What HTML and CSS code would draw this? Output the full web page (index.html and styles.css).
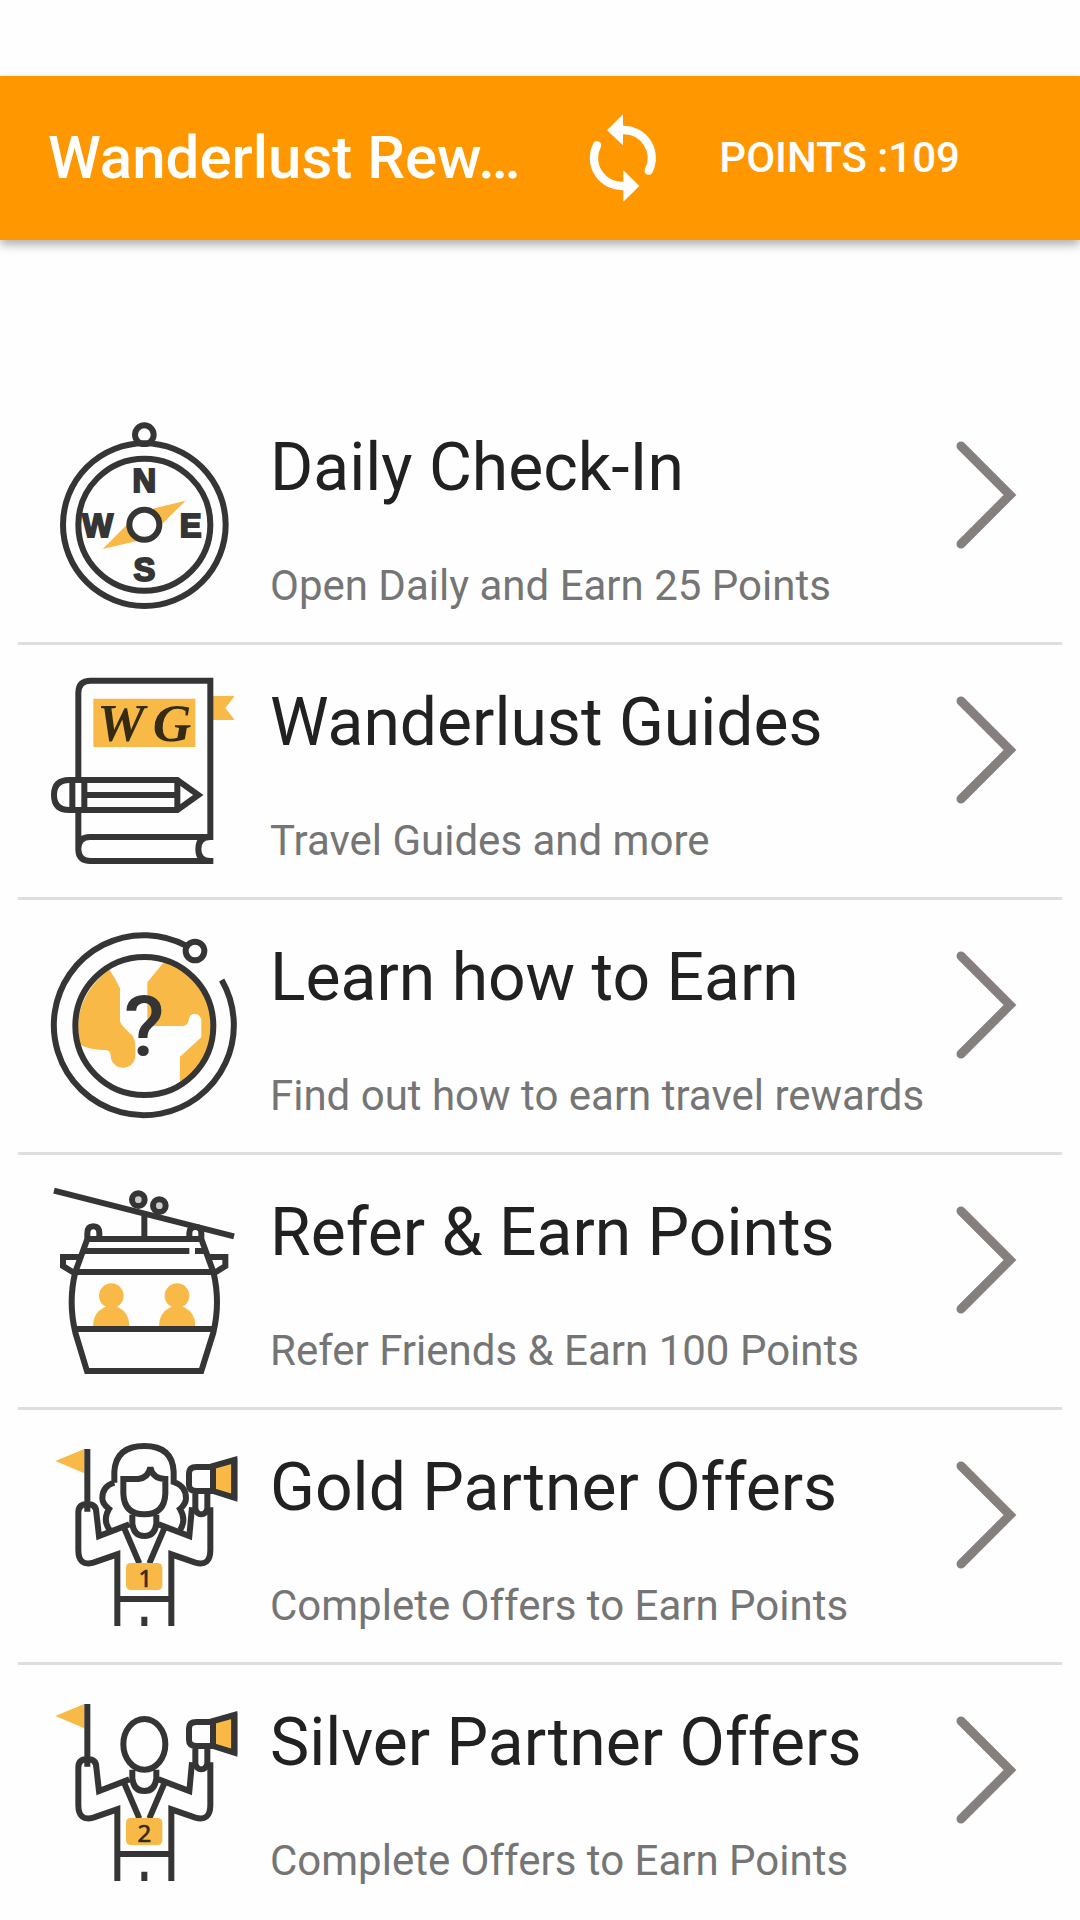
FILE: index.html
```
<!DOCTYPE html>
<html lang="en">
<head>
<meta charset="utf-8">
<meta name="viewport" content="width=device-width, initial-scale=1">
<title>Wanderlust Rewards</title>
<link rel="stylesheet" href="styles.css">
</head>
<body>
<header class="toolbar">
  <h1>Wanderlust Rew…</h1>
  <button class="refresh" aria-label="Refresh">
    <svg viewBox="0 0 390 390">
      <path d="M186 114A84 84 0 0 1 263 236M108 160A84 84 0 0 0 186 282" fill="none" stroke="#fff" stroke-width="25" stroke-linecap="round"/>
      <path d="M186 67V160L138 115ZM187 235V329L235 282Z" fill="#fff"/>
    </svg>
  </button>
  <button class="points">POINTS :109</button>
</header>

<main class="menu">
  <a class="item" href="#checkin">
    <svg class="icon" viewBox="0 0 630 630">
      <circle class="line" cx="313" cy="74" r="28"/>
      <circle class="line" cx="313" cy="344" r="244"/>
      <circle class="line" cx="313" cy="344" r="198"/>
      <path class="fill" d="M188 417L262 343L343 295L437 272L364 344L292 393Z"/>
      <circle class="line paper" cx="313" cy="344" r="45"/>
      <g class="compass">
        <text x="313" y="245">N</text>
        <text x="173" y="380">W</text>
        <text x="452" y="380">E</text>
        <text x="313" y="514">S</text>
      </g>
    </svg>
    <div class="text">
      <h2>Daily Check-In</h2>
      <p>Open Daily and Earn 25 Points</p>
    </div>
    <svg class="arrow" viewBox="0 0 62 110"><path d="M5 6L54 55L5 104"/></svg>
  </a>

  <a class="item" href="#guides">
    <svg class="icon" viewBox="0 0 630 630">
      <path class="fill" d="M519 93H584L556 129L584 165H519ZM160 101H466V246H160Z"/>
      <path class="line" d="M115 345V84Q115 47 152 47H511V516H150Q115 516 115 552Q115 588 152 588H520M115 440V555M511 516Q475 516 475 552Q475 588 511 588"/>
      <path class="line paper" d="M88 345H412L475 390L412 435H88Q42 435 42 390Q42 345 88 345Z"/>
      <path class="line" d="M97 345V435M133 345V435M412 345V435M133 390H412"/>
      <text class="script" x="172" y="228">W</text>
      <text class="script" x="338" y="228">G</text>
    </svg>
    <div class="text">
      <h2>Wanderlust Guides</h2>
      <p>Travel Guides and more</p>
    </div>
    <svg class="arrow" viewBox="0 0 62 110"><path d="M5 6L54 55L5 104"/></svg>
  </a>

  <a class="item" href="#learn">
    <svg class="icon" viewBox="0 0 630 630">
      <path class="fill" d="M207 148Q225 173 240 205V303Q244 318 275 344Q286 358 286 380V405A37 37 0 0 1 212 408Q212 390 196 390Q152 390 120 374Q92 240 207 148ZM374 124Q520 165 516 325Q515 425 420 486V410L484 352V300Q480 282 465 282Q447 282 446 302Q442 318 425 318H322V187Z"/>
      <circle class="line" cx="313" cy="318" r="207"/>
      <path class="line" d="M438 77A270 270 0 1 0 545 180"/>
      <circle class="line paper" cx="465" cy="93" r="28"/>
      <text class="question" x="313" y="408">?</text>
    </svg>
    <div class="text">
      <h2>Learn how to Earn</h2>
      <p>Find out how to earn travel rewards</p>
    </div>
    <svg class="arrow" viewBox="0 0 62 110"><path d="M5 6L54 55L5 104"/></svg>
  </a>

  <a class="item" href="#refer">
    <svg class="icon" viewBox="0 0 630 630">
      <path class="line" d="M42 47L582 184M313 113V192M136 192H490M130 228H448M465 228H500M106 291H520M104 462H522"/>
      <circle class="line wheel" cx="295" cy="74" r="19"/>
      <circle class="line wheel" cx="358" cy="92" r="19"/>
      <path class="line" d="M142 192V175Q142 154 160 154Q178 154 178 175V192M448 192V175Q448 156 466 156Q484 156 484 175V192M142 192L106 291Q84 380 106 473L141 588H484L520 473Q542 380 520 291L484 192M128 246H69V273L104 295M498 246H556V273L522 295"/>
      <g class="fill">
        <circle cx="214" cy="362" r="37"/>
        <path d="M159 453Q159 414 193 397Q214 388 235 397Q268 414 268 453Z"/>
        <circle cx="411" cy="362" r="37"/>
        <path d="M357 453Q357 414 391 397Q412 388 433 397Q466 414 466 453Z"/>
      </g>
    </svg>
    <div class="text">
      <h2>Refer &amp; Earn Points</h2>
      <p>Refer Friends &amp; Earn 100 Points</p>
    </div>
    <svg class="arrow" viewBox="0 0 62 110"><path d="M5 6L54 55L5 104"/></svg>
  </a>

  <a class="item" href="#gold">
    <svg class="icon" viewBox="0 0 630 630">
      <defs>
        <!-- body, flag and megaphone are the same for both partners -->
        <g id="guide">
          <path class="fill" d="M46 93L133 57V130ZM520 108L580 92V202L520 183Z"/>
          <path class="line" d="M142 57V245M142 222Q115 222 115 248V360Q115 410 160 398L232 373V588M142 222Q169 222 169 248L177 318L268 283M356 283L448 318L456 232M511 232V360Q511 410 466 398L394 373V588M232 507H394M313 560V588M277 254V280Q281 318 313 318Q345 318 349 280V254M250 288L298 400M376 288L328 400"/>
          <path class="line" d="M519 111H470Q447 111 447 130V165Q447 183 470 183H519V108L583 90V203L519 183M466 183V236Q470 253 484 253Q498 253 502 236V183"/>
          <path class="line" d="M583 84V209"/>
          <rect class="fill" x="258" y="399" width="109" height="81" rx="14"/>
        </g>
      </defs>
      <path class="line" d="M223 158V125Q228 48 313 48Q397 48 401 125V156Q438 168 438 205Q438 222 420 237Q440 270 420 300M223 158Q187 168 187 205Q187 222 207 237Q187 270 209 300"/>
      <path class="line" d="M250 147H295Q325 143 331 112Q338 146 376 147V190Q374 253 313 253Q252 253 250 190Z"/>
      <use href="#guide"/>
      <text class="badge" x="316" y="470">1</text>
    </svg>
    <div class="text">
      <h2>Gold Partner Offers</h2>
      <p>Complete Offers to Earn Points</p>
    </div>
    <svg class="arrow" viewBox="0 0 62 110"><path d="M5 6L54 55L5 104"/></svg>
  </a>

  <a class="item" href="#silver">
    <svg class="icon" viewBox="0 0 630 630">
      <ellipse class="line" cx="313" cy="178" rx="63" ry="76"/>
      <use href="#guide"/>
      <text class="badge" x="313" y="470">2</text>
    </svg>
    <div class="text">
      <h2>Silver Partner Offers</h2>
      <p>Complete Offers to Earn Points</p>
    </div>
    <svg class="arrow" viewBox="0 0 62 110"><path d="M5 6L54 55L5 104"/></svg>
  </a>
</main>
</body>
</html>
```
FILE: styles.css
```
* {
  box-sizing: border-box;
}

body {
  margin: 0;
  padding-top: 76px;
  background: #fefefe;
  font-family: Roboto, sans-serif;
}

h1, h2, p {
  margin: 0;
  font-weight: normal;
}

button {
  border: 0;
  padding: 0;
  background: none;
  color: inherit;
  font: inherit;
}

/* Orange bar on top */
.toolbar {
  display: flex;
  align-items: center;
  height: 164px;
  padding: 0 120px 2px 48px;
  background: #ff9800;
  color: #fff;
  box-shadow: 0 5px 9px rgba(0, 0, 0, 0.3);
}

.toolbar h1 {
  flex: 1;
  white-space: nowrap;
  font-size: 60px;
  font-weight: 500;
}

.refresh {
  width: 130px;
  height: 130px;
}

.refresh svg {
  display: block;
}

.points {
  margin-left: 28px;
  font-size: 42px;
  font-weight: 500;
}

/* List of rewards */
.menu {
  margin: 150px 18px 0;
}

.item {
  display: flex;
  height: 255px;
  border-bottom: 3px solid #dedede;
  color: #212121;
  text-decoration: none;
}

.item:last-child {
  border-bottom: 0;
}

.icon {
  flex: none;
  width: 210px;
  height: 210px;
  margin: 20px 0 0 22px;
}

.text {
  flex: 1;
  padding: 36px 0 0 20px;
  white-space: nowrap;
}

.text h2 {
  font-size: 66px;
  line-height: 84px;
}

.text p {
  margin-top: 51px;
  color: #757575;
  font-size: 42px;
  line-height: 50px;
}

.arrow {
  flex: none;
  width: 62px;
  height: 110px;
  margin: 50px 44px 0 0;
  fill: none;
  stroke: #857f7e;
  stroke-width: 9;
  stroke-linecap: round;
}

/* Icon parts */
.line {
  fill: none;
  stroke: #353535;
  stroke-width: 18;
}

.paper {
  fill: #fefefe;
}

.wheel {
  fill: #ccc;
}

.fill {
  fill: #f9b946;
}

.compass {
  fill: #353535;
  stroke: #353535;
  stroke-width: 6;
  font: bold 98px "Liberation Sans", sans-serif;
  text-anchor: middle;
}

.script {
  fill: #352a12;
  font: italic bold 160px "Liberation Serif", serif;
}

.question {
  fill: #353535;
  font: 500 250px Roboto, sans-serif;
  text-anchor: middle;
}

.badge {
  fill: #352a12;
  stroke: #352a12;
  stroke-width: 2;
  font: 72px "Noto Sans", sans-serif;
  text-anchor: middle;
}
```
